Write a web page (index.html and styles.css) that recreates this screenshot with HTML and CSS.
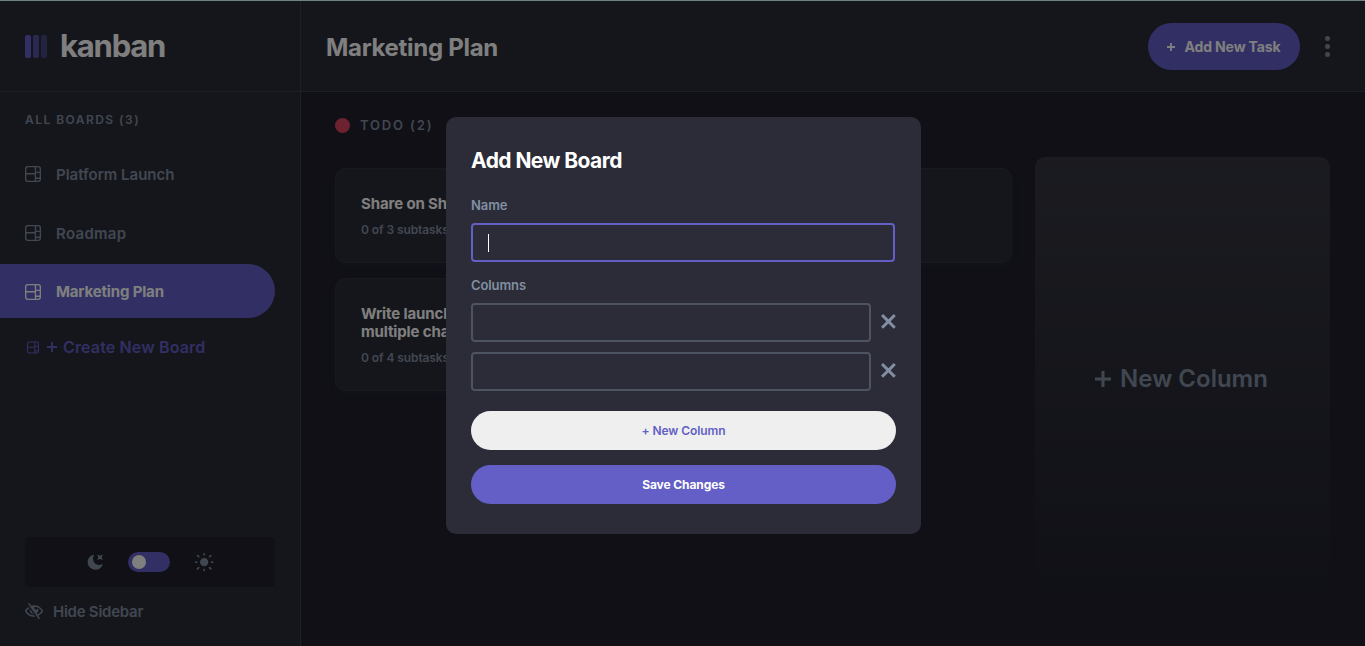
FILE: index.html
```html
<!DOCTYPE html>
<html lang="en">
<head>
<meta charset="utf-8">
<title>Kanban</title>
<link rel="stylesheet" href="styles.css">
</head>
<body>
<svg class="defs" width="0" height="0">
  <symbol id="board" viewBox="0 0 16 16"><path fill="currentColor" d="M0 2.889A2.889 2.889 0 0 1 2.889 0H13.11A2.889 2.889 0 0 1 16 2.889V13.11A2.888 2.888 0 0 1 13.111 16H2.89A2.889 2.889 0 0 1 0 13.111V2.89Zm1.333 5.555v4.667c0 .859.697 1.556 1.556 1.556h6.889V8.444H1.333Zm8.445-1.333V1.333h-6.89A1.556 1.556 0 0 0 1.334 2.89V7.11h8.445Zm4.889-1.333V2.89a1.555 1.555 0 0 0-1.556-1.556h-2v4.445h3.556Zm0 5.778V7.11h-3.556v4.445h3.556Zm0 1.333h-3.556v1.778h2a1.556 1.556 0 0 0 1.556-1.556Z"/></symbol>
  <symbol id="cross" viewBox="0 0 15 15"><path fill="currentColor" d="m12.728 0 2.122 2.122L9.546 7.425l5.304 5.303-2.122 2.122-5.303-5.304-5.303 5.304L0 12.728l5.304-5.303L0 2.122 2.122 0l5.303 5.304z"/></symbol>
</svg>
<div class="app">
  <aside class="sidebar">
    <div class="logo">
      <svg width="22" height="23" viewBox="0 0 22 23" fill="#635fc7"><rect width="6" height="23" rx="2"/><rect x="8" width="6" height="23" rx="2" opacity=".75"/><rect x="16" width="6" height="23" rx="2" opacity=".5"/></svg>
      <span class="logo-text">kanban</span>
    </div>
    <div class="boards">
      <h2 class="boards-title">ALL BOARDS (3)</h2>
      <a class="board"><svg class="ico"><use href="#board"/></svg><span>Platform Launch</span></a>
      <a class="board roadmap"><svg class="ico"><use href="#board"/></svg><span>Roadmap</span></a>
      <a class="board active"><svg class="ico"><use href="#board"/></svg><span>Marketing Plan</span></a>
      <a class="create"><svg class="ico-s"><use href="#board"/></svg><svg class="plus-c" viewBox="0 0 10 10"><path d="M5 0v10M0 5h10" stroke="currentColor" stroke-width="1.9"/></svg><span>Create New Board</span></a>
    </div>
    <div class="side-foot">
      <div class="theme">
        <svg width="16" height="16" viewBox="0 0 16 16"><path fill="#828fa3" d="M6.474.682c.434-.11.718.406.481.78A6.067 6.067 0 0 0 6.01 4.72c0 3.418 2.827 6.187 6.314 6.187.89.002 1.77-.182 2.584-.54.408-.18.894.165.724.57-1.16 2.775-3.944 4.73-7.194 4.73-4.292 0-7.771-3.41-7.771-7.615 0-3.541 2.466-6.518 5.807-7.37Zm8.433.07c.442-.294.969.232.674.674l-.525.787a1.943 1.943 0 0 0 0 2.157l.525.788c.295.441-.232.968-.674.673l-.787-.525a1.943 1.943 0 0 0-2.157 0l-.786.525c-.442.295-.97-.232-.675-.673l.525-.788a1.943 1.943 0 0 0 0-2.157l-.525-.787c-.295-.442.232-.968.674-.673l.787.525a1.943 1.943 0 0 0 2.157 0Z"/></svg>
        <span class="switch"><i></i></span>
        <svg width="19" height="19" viewBox="0 0 19 19"><path fill="#828fa3" d="M9.167 15.833a.833.833 0 0 1 .833.834v.833a.833.833 0 0 1-1.667 0v-.833a.833.833 0 0 1 .834-.834ZM3.75 13.75a.833.833 0 0 1 .59 1.422l-1.25 1.25a.833.833 0 0 1-1.18-1.178l1.25-1.25a.833.833 0 0 1 .59-.244Zm10.833 0c.221 0 .433.088.59.244l1.25 1.25a.833.833 0 0 1-1.179 1.178l-1.25-1.25a.833.833 0 0 1 .59-1.422ZM9.167 5a4.167 4.167 0 1 1 0 8.334 4.167 4.167 0 0 1 0-8.334Zm-7.5 3.333a.833.833 0 0 1 0 1.667H.833a.833.833 0 1 1 0-1.667h.834Zm15.833 0a.833.833 0 0 1 0 1.667h-.833a.833.833 0 0 1 0-1.667h.833Zm-1.667-6.666a.833.833 0 0 1 .59 1.422l-1.25 1.25a.833.833 0 1 1-1.179-1.178l1.25-1.25a.833.833 0 0 1 .59-.244Zm-13.333 0c.221 0 .433.088.59.244l1.25 1.25a.833.833 0 0 1-1.18 1.178L1.91 3.09a.833.833 0 0 1 .59-1.422ZM9.167 0A.833.833 0 0 1 10 .833v.834a.833.833 0 1 1-1.667 0V.833A.833.833 0 0 1 9.167 0Z"/></svg>
      </div>
      <a class="hide"><svg width="18" height="16" viewBox="0 0 18 16"><path fill="#828fa3" d="M8.522 11.223a4.252 4.252 0 0 1-3.654-5.22l3.654 5.22ZM9 12.25A8.685 8.685 0 0 1 1.5 8a8.612 8.612 0 0 1 2.76-2.864l-.86-1.23A10.112 10.112 0 0 0 .208 7.238a1.5 1.5 0 0 0 0 1.524A10.187 10.187 0 0 0 9 13.75c.414 0 .828-.025 1.239-.074l-1-1.43A8.88 8.88 0 0 1 9 12.25Zm8.792-3.488a10.14 10.14 0 0 1-4.486 4.046l1.504 2.148a.375.375 0 0 1-.092.523l-.648.453a.375.375 0 0 1-.523-.092L3.19 1.044A.375.375 0 0 1 3.282.52L3.93.068a.375.375 0 0 1 .523.092l1.735 2.479A10.308 10.308 0 0 1 9 2.25c3.746 0 7.031 2 8.792 4.988a1.5 1.5 0 0 1 0 1.524ZM16.5 8a8.674 8.674 0 0 0-6.755-4.219A1.75 1.75 0 1 0 12.75 5v-.001a4.25 4.25 0 0 1-1.154 5.366l.834 1.192A8.641 8.641 0 0 0 16.5 8Z"/></svg><span>Hide Sidebar</span></a>
    </div>
  </aside>
  <div class="main">
    <header class="top">
      <h1 class="top-title">Marketing Plan</h1>
      <button class="add-task"><svg width="8" height="8" viewBox="0 0 8 8"><path d="M4 0v8M0 4h8" stroke="currentColor" stroke-width="1.8"/></svg><span>Add New Task</span></button>
      <svg class="dots" width="5" height="21" viewBox="0 0 5 21" fill="#828fa3"><circle cx="2.5" cy="2.5" r="2.5"/><circle cx="2.5" cy="10.5" r="2.5"/><circle cx="2.5" cy="18.5" r="2.5"/></svg>
    </header>
    <div class="canvas">
      <section class="column">
        <h3 class="col-title"><i></i><span>TODO (2)</span></h3>
        <article class="card"><h4>Share on Sh</h4><p>0 of 3 subtasks</p></article>
        <article class="card"><h4>Write launch<br>multiple cha</h4><p>0 of 4 subtasks</p></article>
      </section>
      <section class="column second">
        <article class="card blank"></article>
      </section>
      <button class="new-col"><svg width="16" height="16" viewBox="0 0 16 16"><path d="M8 0v16M0 8h16" stroke="currentColor" stroke-width="3"/></svg><span>New Column</span></button>
    </div>
  </div>
</div>
<div class="overlay">
  <div class="modal">
    <h2 class="modal-title">Add New Board</h2>
    <label class="label l-name">Name</label>
    <div class="input focus"><i class="caret"></i></div>
    <label class="label l-cols">Columns</label>
    <div class="row"><div class="input"></div><svg width="15" height="15"><use href="#cross"/></svg></div>
    <div class="row"><div class="input"></div><svg width="15" height="15"><use href="#cross"/></svg></div>
    <button class="btn light">+ New Column</button>
    <button class="btn primary">Save Changes</button>
  </div>
</div>
</body>
</html>
```
FILE: styles.css
```css
* { box-sizing: border-box; margin: 0; padding: 0; }
body { font-family: Inter, "Open Sans", sans-serif; background: #20212c; color: #fff; overflow: hidden; }
button { font-family: inherit; border: 0; }
.defs { display: block; }
.app { display: flex; height: 646px; }
.sidebar { width: 301px; flex: none; background: #2b2c37; border-right: 1px solid #3e3f4e; display: flex; flex-direction: column; }
.logo { height: 92px; flex: none; border-bottom: 1px solid #3e3f4e; display: flex; align-items: center; gap: 13px; padding: 2px 0 0 25px; }
.logo-text { font-size: 31px; font-weight: 700; line-height: 32px; letter-spacing: -1.2px; padding-bottom: 2px; }
.boards-title { font-size: 12px; font-weight: 600; line-height: 16px; letter-spacing: 1.46px; color: #828fa3; padding: 20px 0 0 25px; margin-bottom: 19px; }
.board { display: flex; align-items: center; width: 275px; height: 54px; margin-bottom: 5px; padding-left: 25px; gap: 15px; color: #828fa3; font-size: 15px; font-weight: 600; border-radius: 0 27px 27px 0; }
.board.roadmap { letter-spacing: .3px; margin-bottom: 4px; }
.board.active { background: #635fc7; color: #fff; font-weight: 700; letter-spacing: -.16px; padding-top: 1px; }
.ico { width: 16px; height: 16px; }
.create { display: flex; align-items: center; height: 48px; padding-left: 27px; color: #635fc7; font-size: 16px; font-weight: 600; letter-spacing: .14px; }
.ico-s { width: 12px; height: 13px; margin-right: 8px; }
.plus-c { width: 10px; height: 10px; margin-right: 6px; }
.side-foot { margin-top: auto; padding: 0 25px 25px; }
.theme { height: 50px; border-radius: 5px; background: #20212c; display: flex; align-items: center; justify-content: center; gap: 25px; }
.switch { width: 42px; height: 20px; border-radius: 10px; background: #635fc7; display: flex; align-items: center; padding-left: 4px; }
.switch i { width: 14px; height: 14px; border-radius: 50%; background: #fff; }
.hide { display: flex; align-items: center; gap: 10px; height: 20px; margin-top: 14px; color: #828fa3; font-size: 15px; font-weight: 600; letter-spacing: -.25px; }
.main { flex: 1; display: flex; flex-direction: column; }
.top { height: 92px; background: #2b2c37; border-bottom: 1px solid #3e3f4e; display: flex; align-items: center; padding: 2px 35px 0 25px; }
.top-title { flex: 1; font-size: 24px; font-weight: 700; letter-spacing: -.3px; padding-top: 1px; }
.add-task { width: 152px; height: 47px; border-radius: 24px; background: #635fc7; color: #fff; font-size: 14px; font-weight: 700; letter-spacing: -.12px; display: flex; align-items: center; justify-content: center; gap: 9px; }
.dots { margin-left: 25px; }
.canvas { flex: 1; display: flex; padding: 0 35px 0 34px; gap: 23px; }
.column { width: 327px; flex: none; padding-top: 23px; }
.column.second { padding-top: 76px; }
.col-title { display: flex; align-items: center; gap: 10px; height: 20px; margin-bottom: 33px; font-size: 13px; font-weight: 600; letter-spacing: 1.85px; color: #828fa3; }
.col-title i { width: 15px; height: 15px; border-radius: 50%; background: #d8455f; }
.card { background: #2b2c37; border: 1px solid #31333d; border-radius: 10px; padding: 26px 25px 24px; margin-bottom: 15px; box-shadow: 0 4px 6px rgba(54,78,126,.1); }
.card.blank { height: 95px; }
.card h4 { font-size: 15px; line-height: 18px; font-weight: 700; letter-spacing: -.12px; }
.card p { font-size: 12px; line-height: 16px; font-weight: 600; letter-spacing: -.1px; color: #828fa3; margin-top: 9px; }
.new-col { width: 295px; margin-top: 65px; height: 443px; border-radius: 10px; background: linear-gradient(#363741, rgba(43,44,55,0)); color: #828fa3; display: flex; align-items: center; justify-content: center; gap: 9px; font-size: 24px; font-weight: 600; padding-right: 2px; }
.overlay { position: fixed; inset: 0; background: rgba(0,0,0,.5); border-top: 1px solid #6f8284; }
.modal { width: 475px; height: 417px; margin: 116px 0 0 446px; background: #2b2c37; border-radius: 10px; padding: 26px 25px 25px; }
.modal-title { font-size: 21px; line-height: 36px; font-weight: 700; letter-spacing: -.56px; }
.label { display: block; font-size: 13px; line-height: 18px; font-weight: 600; color: #828fa3; letter-spacing: -.1px; }
.l-name { margin: 17px 0 9px; }
.l-cols { margin: 14px 0 9px; }
.input { height: 39px; width: 424px; border: 2px solid #4e5362; border-radius: 4px; }
.input.focus { border-color: #635fc7; padding: 9px 0 0 15px; }
.caret { display: block; width: 1px; height: 18px; background: #fff; }
.row { display: flex; gap: 10px; margin-bottom: 10px; color: #828fa3; }
.row .input { width: 400px; }
.row svg { margin-top: 11px; }
.btn { display: block; width: 425px; height: 39px; border-radius: 20px; font-size: 12px; letter-spacing: -.1px; }
.light { background: #efefef; color: #635fc7; font-weight: 600; margin-top: 20px; }
.primary { background: #635fc7; color: #fff; font-weight: 700; margin-top: 15px; }
```
